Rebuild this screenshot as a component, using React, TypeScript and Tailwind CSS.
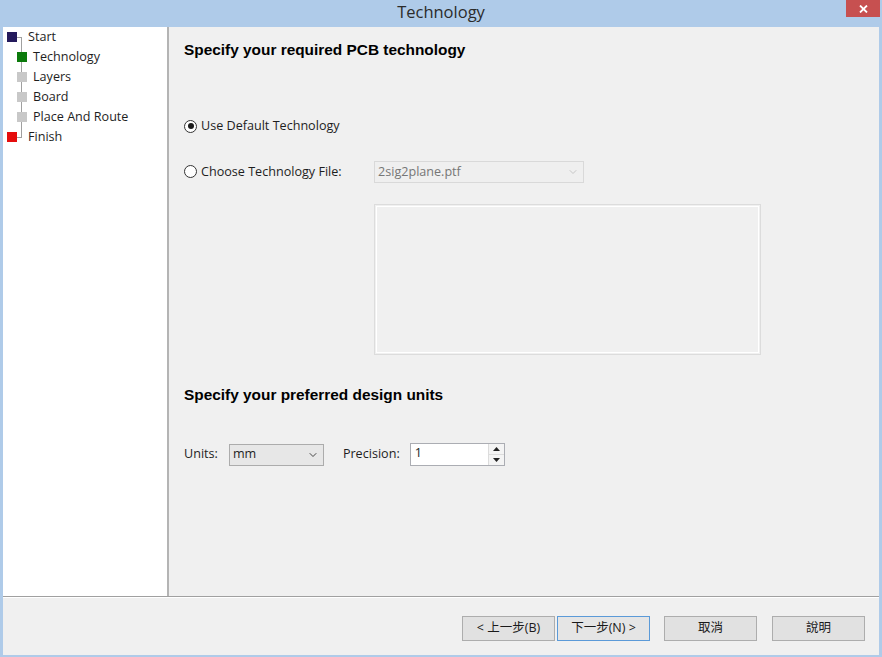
import React from 'react'
import { ChevronDown } from 'lucide-react'

const ui = { fontFamily: '"Open Sans", "Noto Sans CJK TC", sans-serif' }
const head = { fontFamily: '"Liberation Sans", Arial, sans-serif' }

const steps = [
  { label: 'Start', color: 'bg-[#241a5c]', root: true },
  { label: 'Technology', color: 'bg-[#0b7a0b]' },
  { label: 'Layers', color: 'bg-[#c8c8c8]' },
  { label: 'Board', color: 'bg-[#c8c8c8]' },
  { label: 'Place And Route', color: 'bg-[#c8c8c8]' },
  { label: 'Finish', color: 'bg-[#e50d0d]', root: true },
]

const Radio = ({ checked }: { checked?: boolean }) => (
  <span className="w-[13px] h-[13px] rounded-full border border-[#333] bg-white flex items-center justify-center shrink-0">
    {checked && <span className="w-[6px] h-[6px] rounded-full bg-[#1a1a1a]" />}
  </span>
)

const WizardButton = ({ children, focused }: { children: React.ReactNode; focused?: boolean }) => (
  <button
    className={
      'w-[93px] h-[25px] border text-[12.5px] text-[#1a1a1a] flex items-center justify-center ' +
      (focused ? 'border-[#5b9ad8] bg-[#e5e5e5]' : 'border-[#adadad] bg-[#e1e1e1]')
    }
    style={ui}
  >
    {children}
  </button>
)

export default function App() {
  return (
    <div className="w-[882px] h-[657px] bg-[#afcbe9] flex flex-col overflow-hidden" style={ui}>
      {/* title bar */}
      <div className="h-[27px] relative flex items-center justify-center shrink-0">
        <span className="text-[16.5px] text-[#2b2b2b] leading-none -mt-[3px]">Technology</span>
        <div className="absolute right-[2px] top-0 w-[34px] h-[17px] bg-[#c75050] flex items-center justify-center">
          <svg width="9" height="8" viewBox="0 0 9 8">
            <path d="M1 0.5 L8 7.5 M8 0.5 L1 7.5" stroke="white" strokeWidth="1.8" />
          </svg>
        </div>
      </div>

      <div className="flex-1 mx-[3px] mb-[2px] bg-[#f0f0f0] flex flex-col">
        <div className="flex h-[569px]">
          {/* step tree */}
          <div className="w-[166px] bg-white border-r-2 border-[#b4b4b4] relative">
            <div className="absolute left-[18px] top-[10px] w-px h-[100px] bg-[#a0a0a0]" />
            <div className="absolute left-[14px] top-[10px] w-[5px] h-px bg-[#a0a0a0]" />
            <div className="absolute left-[14px] top-[110px] w-[5px] h-px bg-[#a0a0a0]" />
            {steps.map((s) => (
              <div key={s.label} className="h-5 flex items-center relative">
                {s.root ? (
                  <>
                    <span className={`ml-[4px] w-[10px] h-[10px] ${s.color}`} />
                    <span className="ml-[11px] text-[12.6px] text-[#1e1e1e]">{s.label}</span>
                  </>
                ) : (
                  <>
                    <span className={`ml-[14px] w-[10px] h-[10px] ${s.color}`} />
                    <span className="ml-[6px] text-[12.6px] text-[#1e1e1e]">{s.label}</span>
                  </>
                )}
              </div>
            ))}
          </div>

          {/* page */}
          <div className="flex-1 pl-[15px] flex flex-col">
            <h1 className="mt-[14px] text-[15.4px] leading-[18px] font-bold text-black" style={head}>
              Specify your required PCB technology
            </h1>

            <div className="mt-[58px] h-[18px] flex items-center gap-[4px] text-[12.6px] text-[#1e1e1e]">
              <Radio checked />
              <span>Use Default Technology</span>
            </div>

            <div className="mt-[26px] h-[22px] flex items-center">
              <div className="w-[190px] flex items-center gap-[4px] text-[12.6px] text-[#1e1e1e]">
                <Radio />
                <span>Choose Technology File:</span>
              </div>
              <div className="w-[210px] h-[22px] border border-[#d9d9d9] bg-[#efefef] flex items-center justify-between px-[3px]">
                <span className="text-[12.6px] text-[#767676]">2sig2plane.ptf</span>
                <ChevronDown size={12} strokeWidth={1.5} className="text-[#b8b8b8] mr-[1px]" />
              </div>
            </div>

            <div className="mt-[21px] ml-[190px] w-[387px] h-[151px] border border-[#dcdcdc] p-px">
              <div className="w-full h-full border border-white" />
            </div>

            <h2 className="mt-[31px] text-[15.4px] leading-[18px] font-bold text-black" style={head}>
              Specify your preferred design units
            </h2>

            <div className="mt-[39px] h-[23px] flex items-center text-[12.6px] text-[#1e1e1e]">
              <span>Units:</span>
              <div className="ml-[11px] w-[95px] h-[22px] border border-[#acacac] bg-[#e7e7e7] flex items-center justify-between px-[3px]">
                <span>mm</span>
                <ChevronDown size={12} strokeWidth={1.8} className="text-[#333] mr-[1px]" />
              </div>
              <span className="ml-[19px]">Precision:</span>
              <div className="ml-[10px] w-[95px] h-[23px] border border-[#abadb3] bg-white flex items-center">
                <span className="flex-1 pl-[4px] -mt-[2px]">1</span>
                <div className="w-[16px] h-full flex flex-col border-l border-[#dcdcdc]">
                  <div className="flex-1 flex items-center justify-center bg-[#f4f4f4] border-b border-[#dcdcdc]">
                    <svg width="7" height="4" viewBox="0 0 7 4"><path d="M0 4 L3.5 0 L7 4Z" fill="#222" /></svg>
                  </div>
                  <div className="flex-1 flex items-center justify-center bg-[#f4f4f4]">
                    <svg width="7" height="4" viewBox="0 0 7 4"><path d="M0 0 L3.5 4 L7 0Z" fill="#222" /></svg>
                  </div>
                </div>
              </div>
            </div>
          </div>
        </div>

        {/* footer */}
        <div className="flex-1 border-t border-[#a0a0a0] flex flex-col">
          <div className="h-px bg-white" />
          <div className="flex justify-end items-start pt-[18px] pr-[14px]">
            <WizardButton>&lt; 上一步(B)</WizardButton>
            <div className="ml-[2px]">
              <WizardButton focused>下一步(N) &gt;</WizardButton>
            </div>
            <div className="ml-[14px]">
              <WizardButton>取消</WizardButton>
            </div>
            <div className="ml-[15px]">
              <WizardButton>說明</WizardButton>
            </div>
          </div>
        </div>
      </div>
    </div>
  )
}
